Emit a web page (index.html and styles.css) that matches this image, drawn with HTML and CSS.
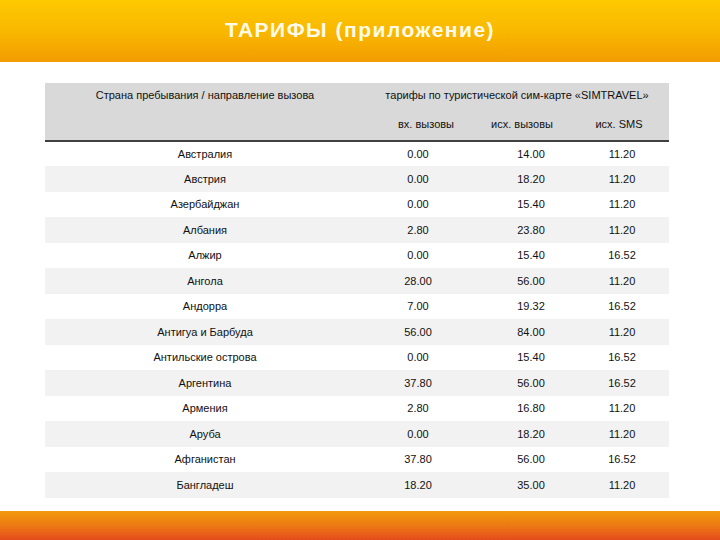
FILE: index.html
```html
<!DOCTYPE html>
<html lang="ru">
<head>
<meta charset="utf-8">
<title>ТАРИФЫ (приложение)</title>
<link rel="stylesheet" href="styles.css">
</head>
<body>
<div class="page">
  <header class="topbar">
    <h1 class="title">ТАРИФЫ (приложение)</h1>
  </header>
  <main class="content">
    <div class="tariffs">
      <div class="thead">
        <div class="th th-country">Страна пребывания / направление вызова</div>
        <div class="th th-group">тарифы по туристической сим-карте «SIMTRAVEL»</div>
        <div class="th th-in">вх. вызовы</div>
        <div class="th th-out">исх. вызовы</div>
        <div class="th th-sms">исх. SMS</div>
      </div>
      <div class="tbody">
        <div class="row"><span class="c1">Австралия</span><span class="c2">0.00</span><span class="c3">14.00</span><span class="c4">11.20</span></div>
        <div class="row alt"><span class="c1">Австрия</span><span class="c2">0.00</span><span class="c3">18.20</span><span class="c4">11.20</span></div>
        <div class="row"><span class="c1">Азербайджан</span><span class="c2">0.00</span><span class="c3">15.40</span><span class="c4">11.20</span></div>
        <div class="row alt"><span class="c1">Албания</span><span class="c2">2.80</span><span class="c3">23.80</span><span class="c4">11.20</span></div>
        <div class="row"><span class="c1">Алжир</span><span class="c2">0.00</span><span class="c3">15.40</span><span class="c4">16.52</span></div>
        <div class="row alt"><span class="c1">Ангола</span><span class="c2">28.00</span><span class="c3">56.00</span><span class="c4">11.20</span></div>
        <div class="row"><span class="c1">Андорра</span><span class="c2">7.00</span><span class="c3">19.32</span><span class="c4">16.52</span></div>
        <div class="row alt"><span class="c1">Антигуа и Барбуда</span><span class="c2">56.00</span><span class="c3">84.00</span><span class="c4">11.20</span></div>
        <div class="row"><span class="c1">Антильские острова</span><span class="c2">0.00</span><span class="c3">15.40</span><span class="c4">16.52</span></div>
        <div class="row alt"><span class="c1">Аргентина</span><span class="c2">37.80</span><span class="c3">56.00</span><span class="c4">16.52</span></div>
        <div class="row"><span class="c1">Армения</span><span class="c2">2.80</span><span class="c3">16.80</span><span class="c4">11.20</span></div>
        <div class="row alt"><span class="c1">Аруба</span><span class="c2">0.00</span><span class="c3">18.20</span><span class="c4">11.20</span></div>
        <div class="row"><span class="c1">Афганистан</span><span class="c2">37.80</span><span class="c3">56.00</span><span class="c4">16.52</span></div>
        <div class="row alt"><span class="c1">Бангладеш</span><span class="c2">18.20</span><span class="c3">35.00</span><span class="c4">11.20</span></div>
      </div>
    </div>
  </main>
  <footer class="bottombar"></footer>
</div>
</body>
</html>
```

FILE: styles.css
```css
html, body {
  margin: 0;
  padding: 0;
  background: #ffffff;
}

.page {
  width: 720px;
  height: 540px;
  display: flex;
  flex-direction: column;
  overflow: hidden;
  font-family: "Liberation Sans", Arial, sans-serif;
  color: #111111;
}

.topbar {
  height: 62px;
  flex: none;
  display: flex;
  align-items: center;
  justify-content: center;
  background: linear-gradient(to bottom, #fdc900 0%, #f9b800 50%, #f29c00 100%);
}

.title {
  margin: 0;
  padding-bottom: 2px;
  font-size: 21px;
  font-weight: bold;
  letter-spacing: 1.5px;
  color: #fffbe8;
}

.content {
  flex: none;
  padding: 21px 0 0 45px;
}

.tariffs {
  width: 624px;
  font-size: 11px;
}

.thead {
  display: grid;
  grid-template-columns: 320px 106px 120px 78px;
  grid-template-rows: 24px 33px;
  background: #d9d9d9;
  border-bottom: 2px solid #404040;
}

.th {
  display: flex;
  align-items: center;
  justify-content: center;
  white-space: nowrap;
}

.th-country {
  grid-column: 1;
  grid-row: 1;
}

.th-group {
  grid-column: 2 / 5;
  grid-row: 1;
}

.th-in {
  grid-column: 2;
  grid-row: 2;
  padding-left: 16px;
}

.th-out {
  grid-column: 3;
  grid-row: 2;
  padding-right: 18px;
}

.th-sms {
  grid-column: 4;
  grid-row: 2;
  padding-right: 22px;
}

.tbody {
  display: grid;
  grid-template-rows: 24px repeat(13, 25.5px);
}

.row {
  display: grid;
  grid-template-columns: 320px 106px 120px 78px;
  align-items: center;
  text-align: center;
  white-space: nowrap;
}

.row.alt {
  background: #f2f2f2;
}

.c4 {
  padding-right: 16px;
}

.bottombar {
  margin-top: auto;
  height: 29px;
  flex: none;
  background: linear-gradient(to bottom, #f29a0c 0%, #ec7a14 50%, #e44b1c 100%);
}
```
